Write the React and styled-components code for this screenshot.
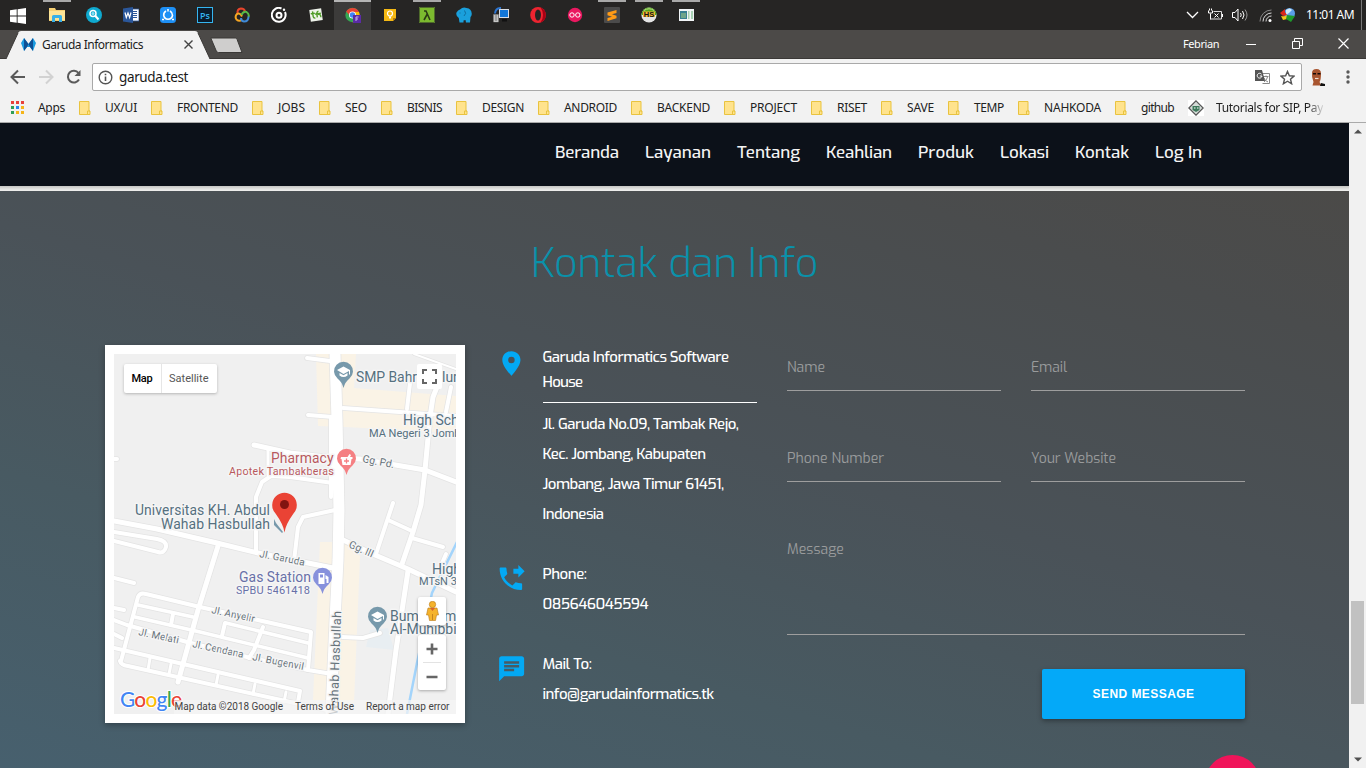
import React, { useLayoutEffect, useRef } from 'react';
import styled, { createGlobalStyle, css } from 'styled-components';

const ui = '"Noto Sans", "Open Sans", sans-serif';
const brand = 'Exo, "Exo 2", Roboto, sans-serif';

const Global = createGlobalStyle`
  * { box-sizing: border-box; }
  html, body { margin: 0; height: 100%; overflow: hidden; }
  body { font-family: ${ui}; background: #262524; }
`;

const FitBox = styled.span`
  display: block;
  width: ${(p) => p.$w}px;
  white-space: pre;
  flex: none;
`;

/* Spreads its letters so that the text fills exactly w pixels. */
function Fit({ w, children, className }) {
  const ref = useRef(null);
  useLayoutEffect(() => {
    const el = ref.current;
    el.style.letterSpacing = '0px';
    const natural = el.getBoundingClientRect().width;
    el.style.letterSpacing = `${(w - natural) / children.length}px`;
  }, [w, children]);
  return (
    <FitBox $w={w} className={className}>
      <span ref={ref}>{children}</span>
    </FitBox>
  );
}

/* ---------- desktop taskbar ---------- */
const Screen = styled.div`
  width: 1366px;
  height: 768px;
  display: flex;
  flex-direction: column;
  overflow: hidden;
`;
const Taskbar = styled.div`
  height: 30px;
  flex: none;
  display: flex;
  align-items: stretch;
  background: #262524;
`;
const StartButton = styled.div`
  width: 38px;
  padding: 7px 0 0 10px;
`;
const Task = styled.div`
  width: 37px;
  display: flex;
  justify-content: center;
  padding-top: 7px;
  ${(p) => p.$open && css`
    background: linear-gradient(#a9a9a9, #a9a9a9) center top / 28px 2px no-repeat;
  `}
  ${(p) => p.$active && css`
    background: linear-gradient(#b5b5b5, #b5b5b5) center top / 100% 2px no-repeat, #3c3b3a;
  `}
  svg { display: block; }
`;
const Tray = styled.div`
  margin-left: auto;
  display: flex;
  align-items: center;
  color: #fff;
  svg { display: block; flex: none; }
`;
const TrayIcon = styled.div`
  width: ${(p) => p.$w}px;
  display: flex;
  justify-content: center;
`;
const Clock = styled(Fit)`
  font-size: 12px;
  margin: -1px 7px 0 8px;
`;
const ShowDesktop = styled.div`
  width: 5px;
  height: 30px;
  border-left: 1px solid #777;
`;

const I = ({ children, w = 16, h = 16, vb }) => (
  <svg width={w} height={h} viewBox={vb || `0 0 ${w} ${h}`}>{children}</svg>
);

const taskIcons = [
  { open: true, el: <I><path d="M0 1h6l1 2h9v11H0z" fill="#f6d074" /><path d="M0 4h16v9H0z" fill="#fde496" /><path d="M3 15V9.5Q3 8 4.500 8h7Q13 8 13 9.500V15h-3v-4H6v4z" fill="#37b0e8" /></I> },
  { el: <I><circle cx="8" cy="8" r="8" fill="#0fa9cf" /><circle cx="7" cy="6.500" r="3" fill="none" stroke="#fff" strokeWidth="1.500" /><circle cx="7" cy="6.500" r="1.500" fill="#8be0f2" /><path d="M9 8.500l3.500 4" stroke="#fff" strokeWidth="2" /></I> },
  { el: <I><path d="M8 2h8v12H8z" fill="#fff" stroke="#2b579a" strokeWidth=".8" /><path d="M9 4.500h5M9 6.500h5M9 8.500h5M9 10.500h5" stroke="#2b579a" /><path d="M0 1.500L10 0v16L0 14.500z" fill="#2b579a" /><path d="M2 5.500l1.300 5L5 6l1.600 4.500 1.400-5" fill="none" stroke="#fff" strokeWidth="1.200" /></I> },
  { el: <I><rect width="16" height="16" rx="3.500" fill="#1e90f5" /><path d="M6 4Q3.500 5.500 3.700 8.500 4.500 12 8 12.300q4-.3 4.500-4Q12.500 5.500 10 4" fill="none" stroke="#fff" strokeWidth="1.600" /><path d="M8 2v2.500M2 12.500h2M12 12.500h2" stroke="#fff" strokeWidth="1.500" /></I> },
  { el: <I><rect x=".5" y=".5" width="15" height="15" fill="#0b1c2c" stroke="#35b5f0" /><text x="3" y="11.500" fontSize="9" fontFamily="Open Sans" fontWeight="600" fill="#35b5f0">Ps</text></I> },
  { el: <I><g fill="none" strokeWidth="2"><path d="M3.500 6.500Q3 2 7 1.500q3.500 0 4 3" stroke="#e8452c" /><path d="M8 9.500Q6 5.500 3 7 .5 9.500 2.500 12.500q3 2.500 5.500 0" stroke="#f5a623" /><path d="M7.500 8Q9 4 12.500 5q3 2 2 5" stroke="#58b947" /><path d="M14.500 9.500q0 5-4.500 5-3-.5-3-3.500" stroke="#3f8ad8" /></g></I> },
  { el: <I><path d="M10.500 1.500A6.900 6.900 0 1 0 14 5" fill="none" stroke="#fff" strokeWidth="2" /><circle cx="8" cy="8.200" r="2.500" fill="none" stroke="#fff" strokeWidth="2" /><circle cx="13" cy="2.800" r="1.200" fill="#fff" /></I> },
  { el: <I><g transform="rotate(-8 8 8)"><path d="M2 2h12v12H2z" fill="#eef3ea" /><path d="M3 6h4M5 4v5q0 2 2 2M7 7h6M11 4.500q-2 0-2 3v3M10 7.500q3 0 2.500 3.500" stroke="#4f9c28" strokeWidth="1.400" fill="none" /></g></I> },
  { open: true, active: true, el: <I><circle cx="7.500" cy="8" r="7.200" fill="#34a853" /><path d="M1.200 4.500A7.300 7.300 0 0 1 14 5H7.500L5 9z" fill="#e94335" /><path d="M14 5a7.300 7.300 0 0 1-6.500 10.200L10.500 9 9 5z" fill="#fbbc05" /><circle cx="7.500" cy="8" r="3.500" fill="#fff" /><circle cx="7.500" cy="8" r="2.700" fill="#4285f4" /><path d="M8 8h8v8H8z" fill="#5a2ca5" /><path d="M11 14v-4h2.500M11 12h2" stroke="#c9b0f0" fill="none" /></I> },
  { el: <I><path d="M2 2h12v9l-3 3H2z" fill="#f5b914" /><path d="M14 11h-3v3z" fill="#b77d0a" /><circle cx="8" cy="6.500" r="2.500" fill="none" stroke="#fff" strokeWidth="1.200" /><path d="M7 9.500h2v2H7z" fill="#fff" /></I> },
  { open: true, el: <I><path d="M0 0h16v16H0z" fill="#7cba2f" /><path d="M.5.5h15v15H.5z" fill="none" stroke="#4f6b2b" /><path d="M5 4h2l4 9M8 7.500L5 13" fill="none" stroke="#2b3b14" strokeWidth="1.600" /></I> },
  { el: <I><path d="M4 2.500Q7-.5 10.500 1q5 .5 5.300 6-.3 2.500-1.300 3l-.5 5.500H10L9.500 13 7.500 13.500v2H3.500L2.800 11Q-.5 9 .5 5.500 2 3 4 2.500z" fill="#1aa0dc" /><path d="M8.500 3.500q2.500 3-.5 5.500M4 5.500v1" stroke="#0f6ea0" fill="none" /></I> },
  { el: <I><path d="M6 2h10v9H6z" fill="#d8dde5" /><path d="M7 3h8v7H7z" fill="#1176d9" /><path d="M9 12h5v2.500H9z" fill="#111" /><path d="M.5 7.500h5v7.500h-5z" fill="#e8e8e8" stroke="#777" strokeWidth=".6" /><path d="M1.500 9h3M1.500 11h3M1.500 13h3" stroke="#555" /><path d="M2 6.500Q2.500.8 8 1" stroke="#2d75d0" strokeWidth="2" fill="none" /></I> },
  { el: <I><ellipse cx="8" cy="8" rx="7.800" ry="8" fill="#ee2430" /><path d="M10.500.6Q15.800 2.500 15.800 8t-5.300 7.400Q13 12 13 8T10.500.6z" fill="#a70014" /><ellipse cx="8" cy="8" rx="3" ry="5.500" fill="#262524" /></I> },
  { el: <I><circle cx="8" cy="8" r="7.200" fill="#ea1860" /><g fill="none" stroke="#fff"><circle cx="5" cy="8" r="2.200" /><circle cx="10.800" cy="8" r="2.200" /></g></I> },
  { open: true, el: <I><rect width="16" height="16" rx="1" fill="#4b4b4b" /><path d="M3.500 5.500L12.500 3v3L8 7.200l4.500 1.500v2.500l-9 2.800v-3l4.500-1.300-4.500-1.500z" fill="#ff9b16" /></I> },
  { open: true, el: <I><circle cx="8" cy="8" r="7.600" fill="#e4e4e4" /><path d="M.4 8a7.600 7.600 0 0 1 15.200 0z" fill="#54a51c" /><path d="M3 3.500Q8 0 13 3.500" stroke="#b7e08a" fill="none" /><path d="M2 4.500h12V10H2z" fill="#f2b632" /><text x="2.800" y="10" fontSize="7.500" fontWeight="700" fontFamily="Liberation Sans" fill="#111">HS</text></I> },
  { open: true, el: <I><path d="M1 2h15v12H1z" fill="#f2f5f7" /><path d="M2 4h7v8H2z" fill="#397f92" /><path d="M3 6h5v5H3z" fill="#6fa58a" /><path d="M10 4h1.500v8H10zM13 4h2v8h-2z" fill="#a9d3b5" /></I> },
];

/* ---------- browser chrome ---------- */
const TabStrip = styled.div`
  height: 29px;
  flex: none;
  display: flex;
  background: #4c4a48;
  border-bottom: 1px solid #3b3937;
`;
const Tab = styled.div`
  position: relative;
  width: 206px;
  height: 29px;
  margin-left: 6px;
  padding: 0 0 0 15px;
  display: flex;
  align-items: center;
  font-size: 12px;
  color: #1d1d1d;
  > * { position: relative; }
`;
const TabShape = styled.svg`
  && { position: absolute; }
  left: 0;
  top: 0;
`;
const TabTitle = styled(Fit)`margin: 0 41px 0 6px;`;
const NewTab = styled.svg`margin: 7px 0 0 -2px;`;
const WindowControls = styled.div`
  margin-left: auto;
  display: flex;
  align-items: center;
  font-size: 11px;
  color: #fff;
  padding-right: 17px;
  height: 27px;
  svg { display: block; }
`;
const Control = styled.div`margin-left: ${(p) => p.$gap}px;`;

const Toolbar = styled.div`
  height: 33px;
  flex: none;
  display: flex;
  align-items: center;
  padding: 3px 0 0 10px;
  background: #f2f2f2;
  svg { display: block; flex: none; }
`;
const NavIcons = styled.div`
  width: 82px;
  display: flex;
  gap: 12px;
`;
const Address = styled.div`
  width: 1210px;
  height: 28px;
  display: flex;
  align-items: center;
  gap: 6px;
  padding: 0 6px 0 5px;
  border: 1px solid #a9a9a9;
  border-radius: 2px;
  background: #fff;
  font-size: 13.500px;
  color: #1a1a1a;
`;
const AddressActions = styled.div`
  margin-left: auto;
  display: flex;
  align-items: center;
  gap: 10px;
`;
const Profile = styled.div`margin-left: 7px; width: 18px;`;
const Dots = styled.div`margin-left: 19px;`;

const Bookmarks = styled.div`
  height: 31px;
  flex: none;
  display: flex;
  align-items: center;
  padding: 1px 0 0 11px;
  background: #f2f2f2;
  border-bottom: 1px solid #aaa;
  font-size: 12px;
  color: #222;
  svg { display: block; flex: none; }
`;
const Bookmark = styled.div`
  display: flex;
  align-items: center;
  gap: ${(p) => p.$gap || 14}px;
  margin-right: 14px;
`;
const Faded = styled(Fit)`
  mask-image: linear-gradient(90deg, #000 86%, transparent 102%);
`;

const Folder = () => (
  <svg width="12" height="14" viewBox="0 0 12 14">
    <path d="M.5.500h9.500v9.500h1v3.500H.5z" fill="#ffe38d" stroke="#e9c33f" />
    <path d="M8.500 13v-3H11" fill="none" stroke="#e9c33f" />
  </svg>
);

const folders = [
  ['UX/UI', 32], ['FRONTEND', 61], ['JOBS', 27], ['SEO', 22], ['BISNIS', 35], ['DESIGN', 42],
  ['ANDROID', 53], ['BACKEND', 53], ['PROJECT', 47], ['RISET', 30], ['SAVE', 27], ['TEMP', 30],
  ['NAHKODA', 57], ['github', 33],
];

/* ---------- page ---------- */
const Viewport = styled.div`
  flex: 1;
  display: flex;
  min-height: 0;
`;
const Page = styled.div`
  width: 1349px;
  font-family: ${brand};
  overflow: hidden;
  display: flex;
  flex-direction: column;
`;
const Header = styled.header`
  height: 68px;
  flex: none;
  display: flex;
  align-items: center;
  justify-content: flex-end;
  gap: 26px;
  padding: 0 147px 9px 0;
  color: #f4f4f4;
  font-size: 17px;
  font-weight: 500;
  background: linear-gradient(#0c1119 63px, #c5c5c2 63px, #e3e3e1 66px, #efefee 68px);
`;
const Section = styled.section`
  flex: 1;
  min-height: 0;
  background: linear-gradient(197deg, #4b4a48 0%, #4a4c4d 15%, #4a5258 45%, #485a62 70%, #47606e 100%);
`;
const Title = styled.h1`
  margin: 0 auto;
  padding-top: 47px;
  width: 287px;
  height: 154px;
  line-height: 50px;
  font-size: 41px;
  font-weight: 350;
  color: #0a91aa;
`;
const Columns = styled.div`
  display: flex;
  padding-left: 105px;
  align-items: flex-start;
`;
const MapCard = styled.div`
  position: relative;
  width: 360px;
  height: 378px;
  padding: 9px;
  background: #fff;
  box-shadow: 0 2px 6px rgba(0, 0, 0, 0.3);
  font-family: Roboto, sans-serif;
  svg { display: block; }
`;
const MapSwitch = styled.div`
  position: absolute;
  left: 19px;
  top: 19px;
  display: flex;
  height: 29px;
  border-radius: 2px;
  overflow: hidden;
  background: #fff;
  box-shadow: 0 1px 3px rgba(0, 0, 0, 0.25);
`;
const MapMode = styled.div`
  padding: 0 8px 0 7.500px;
  line-height: 29px;
  font-size: 11px;
  font-weight: ${(p) => (p.$on ? 500 : 400)};
  color: ${(p) => (p.$on ? '#000' : '#565656')};
  & + & { border-left: 1px solid #e6e6e6; }
`;
const MapButton = styled.div`
  position: absolute;
  right: ${(p) => p.$right || 19}px;
  top: ${(p) => p.$top}px;
  width: ${(p) => p.$w || 28}px;
  height: ${(p) => p.$h}px;
  display: flex;
  align-items: center;
  justify-content: center;
  border-radius: 2px;
  background: #fff;
  box-shadow: 0 1px 3px rgba(0, 0, 0, ${(p) => (p.$flat ? 0 : 0.3)});
`;
const MapCredits = styled.div`
  position: absolute;
  right: 9px;
  bottom: 9px;
  height: 14px;
  display: flex;
  gap: 12px;
  padding: 0 6.500px 0 1px;
  background: rgba(245, 245, 245, 0.7);
  font-size: 10px;
  line-height: 14px;
  color: #444;
`;

const Info = styled.div`
  width: 253px;
  margin-left: 33px;
  padding-left: 1px;
  color: #fff;
  font-size: 15px;
  font-weight: 500;
`;
const InfoRow = styled.div`
  display: flex;
  margin-bottom: 30px;
`;
const InfoIcon = styled.div`
  width: 43.500px;
  flex: none;
  padding-top: ${(p) => p.$top}px;
  svg { display: block; }
`;
const Company = styled.div`
  width: 214px;
  height: 58px;
  line-height: 25px;
  border-bottom: 1px solid #fff;
  margin-bottom: 6px;
`;
const Lines = styled.div`line-height: 30px;`;

const Form = styled.form`
  margin-left: 36px;
  width: 458px;
  display: grid;
  grid-template-columns: 214px 214px;
  column-gap: 30px;
  font-size: 14px;
  color: #999b9c;
`;
const Field = styled.label`
  display: block;
  height: 46px;
  margin-bottom: 45px;
  padding-top: 14px;
  line-height: 18px;
  border-bottom: 1px solid #9e9e9e;
  ${(p) => p.$wide && css`
    grid-column: span 2;
    height: 108px;
    margin-bottom: 34px;
  `}
`;
const Send = styled.button`
  grid-column: span 2;
  justify-self: end;
  width: 203px;
  height: 50px;
  border: 0;
  border-radius: 2px;
  display: flex;
  align-items: center;
  justify-content: center;
  background: #04a9f8;
  color: #fff;
  font: 700 12px "Liberation Sans", Arial, sans-serif;
  box-shadow: 0 2px 5px rgba(0, 0, 0, 0.35);
`;
const Fab = styled.div`
  position: fixed;
  left: 1205px;
  top: 755px;
  width: 55px;
  height: 55px;
  border-radius: 50%;
  background: #f0145a;
`;
const Scrollbar = styled.div`
  width: 17px;
  background: #f1f1f1;
  display: flex;
  flex-direction: column;
  align-items: center;
  padding: 6px 0;
  svg { display: block; }
`;
const Thumb = styled.div`
  width: 13px;
  height: 103px;
  margin: 467px 0 auto;
  background: #c1c1c1;
`;

const links = [['Beranda', 64], ['Layanan', 66], ['Tentang', 63], ['Keahlian', 66], ['Produk', 56], ['Lokasi', 49], ['Kontak', 54], ['Log In', 47]];

const roads = [
  ['M307 358L330 361', 4], ['M414 354L456 369', 2], ['M343 408L456 416', 4], ['M308 415L333 417', 4],
  ['M410 383L407 409', 4], ['M437 387L433 397L430 417L425 470L421 505L413 532L402 564', 5],
  ['M451 387L446 412', 4], ['M331 418L331 497', 4], ['M254 445L290 453L335 458L360 459L425 470L456 482', 5],
  ['M268 450L268 475', 3], ['M256 551L256 497L262 482L271 476L290 477L333 483', 4],
  ['M335 510L303 517L298 527L294 561', 4], ['M393 503L376 554', 4], ['M388 520L412 531', 4],
  ['M412 538L443 547', 4], ['M446 554L440 568', 4], ['M341 539L375 555L408 569L456 592', 5],
  ['M408 571L396 650L388 714', 5], ['M114 521L157 529L217 543L258 553L333 568', 5],
  ['M114 532L157 539Q167 541 166 547Q164 554 158 552L114 541', 4],
  ['M114 578L134 583', 4], ['M114 608L124 610', 4], ['M218 546L198 610L178 682', 5],
  ['M121 661L138 597Q140 592 146 594L200 607L311 632L308 670L332 674', 4],
  ['M138 605L193 617', 3.5], ['M135 617L200 632L308 658', 3.5], ['M226 623L308 643', 3.500],
  ['M114 620L127 625L187 642L247 657L308 670', 4], ['M114 648L183 664L300 691L298 702', 4],
  ['M120 661Q121 665 128 666L290 702L332 711', 4], ['M173 614L171 625', 4], ['M225 623L222 636', 4],
  ['M263 627L254 650L249 658', 4], ['M150 658L148 670', 3], ['M171 664L169 674', 3],
  ['M218 675L216 685', 3], ['M255 684L253 694', 3], ['M286 692L284 702', 3], ['M114 634L122 638', 4],
  ['M342 637L363 638L380 633', 4], ['M114 459L117 459', 4],
  ['M335 354L337 420L339 510L338 560L335 620L331 714', 11],
];

const Label = styled.text`
  font-family: Roboto, sans-serif;
  font-size: ${(p) => p.$s || 14}px;
  fill: ${(p) => p.$c || '#56707f'};
  stroke: #f5f5f5;
  stroke-width: 3px;
  stroke-linejoin: round;
  paint-order: stroke;
`;

const MapPin = ({ x, y, color, children }) => (
  <g transform={`translate(${x} ${y})`}>
    <path d="M0 13Q-1.500 7-6 3.500A9.500 9.500 0 1 1 6 3.500Q1.500 7 0 13Z" transform="translate(0 2)" fill={color} />
    <g fill="#fff">{children}</g>
  </g>
);
const Cap = () => (
  <path d="M-6.500-3L0-6.500 6.500-3v4.500H5.500V-2L0 1ZM-4 0v2.500Q0 5.500 4 2.500V0L0 2.200Z" />
);

const street = '#66727a';
const MapDrawing = () => (
  <svg width="342" height="360" viewBox="114 354 342 360">
    <path d="M114 354h342v360H114z" fill="#f0f0f0" />
    <path d="M316 354h40l-2 34 102 8v37l-111-6-27-1z" fill="#faf3e6" />
    <path d="M320 542h25l15 14-6 147-41-3z" fill="#faf3e6" />
    <path d="M370 630l18-2 6 22-28-3z" fill="#e8eef2" />
    <path d="M457 542L432 593L417 663L407 714" fill="none" stroke="#a3d4fb" strokeWidth="2.500" />
    <g fill="none" strokeLinecap="round" strokeLinejoin="round">
      {roads.map(([d, w]) => <path key={d} d={d} stroke="#e4e4e4" strokeWidth={w + 1.500} />)}
      {roads.map(([d, w]) => <path key={d} d={d} stroke="#fff" strokeWidth={w} />)}
    </g>
    <MapPin x={343.500} y={373} color="#7799ab"><Cap /></MapPin>
    <MapPin x={377.500} y={618} color="#7799ab"><Cap /></MapPin>
    <MapPin x={346.500} y={460} color="#f58083">
      <path d="M-5.500-3H1L3-6 4.500-5 3.500-3H6V-1H5L4 5H-4L-5-1H-6Z" />
      <path d="M0-1.500v5M-2.500 1h5" stroke="#f58083" strokeWidth="1.300" />
    </MapPin>
    <MapPin x={322.500} y={579} color="#8791dc">
      <path d="M-4-6H2V5H-4ZM3-4l3 2v6H4V0H3Z" />
      <path d="M-2.500-4.500h3v3h-3z" fill="#8791dc" />
    </MapPin>
    <Label x="356" y="382" textLength="61">SMP Bahr</Label>
    <Label x="442" y="382">lum</Label>
    <Label x="403" y="425">High School</Label>
    <Label x="369" y="437" $s={11}>MA Negeri 3 Jombang</Label>
    <Label x="271" y="463" textLength="62.500" $c="#b8595d">Pharmacy</Label>
    <Label x="229" y="475" textLength="105" $s={11} $c="#b8595d">Apotek Tambakberas</Label>
    <Label x="135" y="515" textLength="135">Universitas KH. Abdul</Label>
    <Label x="161" y="529" textLength="109">Wahab Hasbullah</Label>
    <Label x="239" y="582" textLength="72" $c="#6870a8">Gas Station</Label>
    <Label x="236" y="594" textLength="74" $s={11} $c="#6870a8">SPBU 5461418</Label>
    <Label x="432" y="574">High School</Label>
    <Label x="419" y="585" $s={11}>MTsN 3</Label>
    <Label x="390" y="620.500">Bum</Label>
    <Label x="444" y="620.500">ma</Label>
    <Label x="390" y="634">Al-Muhibbin</Label>
    <Label transform="translate(362 462) rotate(11)" textLength="32" $s={10.500} $c={street}>Gg. Pd.</Label>
    <Label transform="translate(348 547) rotate(24)" textLength="26" $s={10.500} $c={street}>Gg. III</Label>
    <Label transform="translate(259 557) rotate(11)" textLength="46" $s={10} $c={street}>Jl. Garuda</Label>
    <Label transform="translate(211 613) rotate(12)" textLength="44" $s={10} $c={street}>Jl. Anyelir</Label>
    <Label transform="translate(138 635) rotate(12)" textLength="41" $s={10} $c={street}>Jl. Melati</Label>
    <Label transform="translate(192 647) rotate(12)" textLength="52" $s={10} $c={street}>Jl. Cendana</Label>
    <Label transform="translate(252 660) rotate(11)" textLength="52" $s={10} $c={street}>Jl. Bugenvil</Label>
    <Label transform="translate(337.500 715) rotate(-88)" textLength="104" $s={12.500} $c={street}>Wahab Hasbullah</Label>
    <path d="M274 519l2 4 7 9-1 1-8-8z" fill="#7799ab" />
    <path d="M284.500 532.500Q283.500 524.500 275.500 513.500A12.300 12.300 0 1 1 293.500 513.500Q285.500 524.500 284.500 532.500Z" fill="#ea4335" />
    <circle cx="284.500" cy="504.500" r="4.500" fill="#811411" />
    <text x="120" y="707" fontSize="21" fontWeight="500" fontFamily="Lato, sans-serif" textLength="62" stroke="#fff" strokeWidth="2" paintOrder="stroke">
      <tspan fill="#4285f4">G</tspan><tspan fill="#ea4335">o</tspan><tspan fill="#fbbc05">o</tspan>
      <tspan fill="#4285f4">g</tspan><tspan fill="#34a853">l</tspan><tspan fill="#ea4335">e</tspan>
    </text>
  </svg>
);

export default function App() {
  return (
    <Screen>
      <Global />
      <Taskbar>
        <StartButton>
          <I><path d="M0 2.300L6.700 1.300V7.500H0zM7.600 1.200L16 0V7.500H7.600zM0 8.400H6.700V14.700L0 13.700zM7.600 8.400H16V16L7.600 14.800z" fill="#fff" /></I>
        </StartButton>
        {taskIcons.map((t, i) => <Task key={i} $open={t.open} $active={t.active}>{t.el}</Task>)}
        <Tray>
          <TrayIcon $w={24}><I w={13} h={8}><path d="M1 1l5.500 5.500L12 1" fill="none" stroke="#fff" strokeWidth="1.300" /></I></TrayIcon>
          <TrayIcon $w={24}><I w={17} h={14}><g fill="none" stroke="#fff"><path d="M.5 2.500v2.500h4V2.500M1.500 .5v2M3.500 .5v2M2.500 5.500v6" /><path d="M5.500 3.500h8v7.500H2.500" stroke="#ddd" /><path d="M14.500 6v3M6.500 5.500l4 4M10.500 5.500l-4 4" /></g></I></TrayIcon>
          <TrayIcon $w={24}><I w={17} h={14}><g fill="none" stroke="#fff"><path d="M.5 4.500h2.500l3-3.500v12l-3-3.500H.5zM8.500 5q1.500 2 0 4M10.500 3q3 4 0 8" /><path d="M13 1.500q4 5.500 0 11" stroke="#999" /></g></I></TrayIcon>
          <TrayIcon $w={26}><I w={13} h={13}><g fill="none" stroke="#ddd"><path d="M1 12.500A11.500 11.500 0 0 1 12.500 1" stroke="#888" /><path d="M4 12.500A8.500 8.500 0 0 1 12.500 4M7 12.500A5.500 5.500 0 0 1 12.500 7" /></g><circle cx="11" cy="11.500" r="1.500" fill="#fff" /></I></TrayIcon>
          <TrayIcon $w={20}><I w={16} h={14}><circle cx="9.500" cy="5.500" r="5.500" fill="#5b9ee8" /><path d="M6 2q4-3 6 0l-3 3-3 2z" fill="#cfe9f8" /><path d="M0 5l5-4v3l2 3-4 1z" fill="#d9261c" /><path d="M1 8q4 1 7-1l-1 4-4 1z" fill="#f3c51b" /><path d="M7 7l8 1-4 6-5-3z" fill="#1f9a2c" /></I></TrayIcon>
          <Clock w={48}>11:01 AM</Clock>
          <ShowDesktop />
        </Tray>
      </Taskbar>

      <TabStrip>
        <Tab>
          <TabShape width="206" height="29" viewBox="0 0 206 29">
            <path d="M0 29L12 3Q13 1 15 1H189Q191 1 192 3L204 29Z" fill="#f2f2f2" />
            <path d="M0 29L12 3M192 3L204 29" stroke="#3b3937" />
          </TabShape>
          <I w={15} h={13}><path d="M3 0L7.500 6 12 0l3 5-3 8-3-4H6l-3 4-3-8z" fill="#1a9be0" /><path d="M3 0l4.500 6L6 9 3 13zM12 0L7.500 6 9 9l3 4z" fill="#0d4f94" /></I>
          <TabTitle w={101}>Garuda Informatics</TabTitle>
          <I w={9} h={9}><path d="M.5.5l8 8M8.500.5l-8 8" stroke="#444" strokeWidth="1.400" /></I>
        </Tab>
        <NewTab width="34" height="17" viewBox="0 0 34 17"><path d="M.8 1H25.300q1.200 0 1.700 1.200L32 15.500H8.500Q7 15.500 6.300 14Z" fill="#cfcecd" stroke="#3b3937" /></NewTab>
        <WindowControls>
          <Fit w={36}>Febrian</Fit>
          <Control $gap={27}><I w={10} h={10}><path d="M0 5.500h10" stroke="#fff" /></I></Control>
          <Control $gap={36}><I w={11} h={11}><path d="M.5 3.500h7v7h-7zM2.500 3V.5h8v7H8" fill="none" stroke="#fff" /></I></Control>
          <Control $gap={35}><I w={11} h={11}><path d="M.5.5l10 10M10.500.5l-10 10" stroke="#fff" strokeWidth="1.200" /></I></Control>
        </WindowControls>
      </TabStrip>

      <Toolbar>
        <NavIcons>
          <I><path d="M15 8H2M8 1.500L1.500 8 8 14.500" fill="none" stroke="#5a5a5a" strokeWidth="2" /></I>
          <I><path d="M1 8h13M8 1.500L14.500 8 8 14.500" fill="none" stroke="#d2d2d2" strokeWidth="2" /></I>
          <I><path d="M13 10.500A5.900 5.900 0 1 1 12.500 4" fill="none" stroke="#5a5a5a" strokeWidth="2" /><path d="M14.500 1v6h-6z" fill="#5a5a5a" /></I>
        </NavIcons>
        <Address>
          <I w={15} h={15}><circle cx="7.500" cy="7.500" r="6.300" fill="none" stroke="#555" strokeWidth="1.400" /><path d="M7.500 6.500v4.500M7.500 3.700v1.500" stroke="#555" strokeWidth="1.600" /></I>
          <Fit w={69}>garuda.test</Fit>
          <AddressActions>
            <I w={15} h={14}><path d="M5.500 3.500h9v10h-7" fill="#fff" stroke="#888" /><path d="M8 6.500h5.500M11 5.500v1M9 12q3-2 3.500-5M9 8q1 3 4 4" stroke="#888" fill="none" /><path d="M0 0h7l3 11H0z" fill="#555" /><path d="M6.500 4.200A2.400 2.400 0 1 0 7 6H4.800" fill="none" stroke="#fff" /></I>
            <I w={15} h={15} vb="0 0 16 16"><path d="M8 1.500l2 4.600 5 .4-3.800 3.300 1.200 4.900L8 12l-4.400 2.700 1.200-4.900L1 6.500l5-.4z" fill="none" stroke="#555" strokeWidth="1.500" /></I>
          </AddressActions>
        </Address>
        <Profile><I w={18} h={18}><path d="M3 5Q3 1 7.500 1T12 5.500Q12 12 10.500 14l2 3.500H3.500l1-3.500Q2.500 9 3 5z" fill="#a8552f" /><path d="M4 5h3v1.500H4zM8.500 5h3v1.500h-3z" fill="#160b08" /><path d="M6 10.500h3.500" stroke="#f1ddd0" strokeWidth="1.200" /><path d="M12 15l4 1v2h-5z" fill="#111" /></I></Profile>
        <Dots><I w={4} h={14}><g fill="#5a5a5a"><circle cx="2" cy="2" r="1.700" /><circle cx="2" cy="7" r="1.700" /><circle cx="2" cy="12" r="1.700" /></g></I></Dots>
      </Toolbar>

      <Bookmarks>
        <Bookmark>
          <I w={13} h={13}>
            <path d="M0 0h3v3H0zM5 0h3v3H5zM10 0h3v3h-3z" fill="#e8413c" />
            <path d="M0 5h3v3H0z" fill="#2e9e57" /><path d="M5 5h3v3H5z" fill="#2c87ee" /><path d="M10 5h3v3h-3zM10 10h3v3h-3zM5 10h3v3H5z" fill="#f5b51a" />
            <path d="M0 10h3v3H0z" fill="#2e9e57" />
          </I>
          <Fit w={27}>Apps</Fit>
        </Bookmark>
        {folders.map(([name, w]) => (
          <Bookmark key={name}><Folder /><Fit w={w}>{name}</Fit></Bookmark>
        ))}
        <Bookmark $gap={12}>
          <I><path d="M0 0h16v16H0z" fill="#fff" /><path d="M8 .8L15.200 8 8 15.200.8 8z" fill="#d5dcd8" stroke="#555" strokeWidth="1.200" /><path d="M4.500 6h7v4l-3.500 2-3.500-2z" fill="#3f7a5c" /><path d="M6 8h1.500M9 8h1.500" stroke="#fff" /></I>
          <Faded w={107}>Tutorials for SIP, Pay</Faded>
        </Bookmark>
      </Bookmarks>

      <Viewport>
        <Page>
          <Header>{links.map(([t, w]) => <Fit key={t} w={w}>{t}</Fit>)}</Header>
          <Section>
            <Title><Fit w={287}>Kontak dan Info</Fit></Title>
            <Columns>
              <MapCard>
                <MapDrawing />
                <MapSwitch><MapMode $on><Fit w={21}>Map</Fit></MapMode><MapMode><Fit w={39.500}>Satellite</Fit></MapMode></MapSwitch>
                <MapButton $top={19} $right={23} $w={25} $h={25} $flat>
                  <I w={15} h={15}><path d="M1 5V1h4M10 1h4v4M14 10v4h-4M5 14H1v-4" fill="none" stroke="#666" strokeWidth="2" /></I>
                </MapButton>
                <MapButton $top={252} $h={28}>
                  <I w={13} h={20}><circle cx="6.500" cy="3.500" r="3.200" fill="#f5b32c" stroke="#b9781a" strokeWidth=".6" /><path d="M2 7h9l1.500 7h-2l-1 5.500H3.500l-1-5.500h-2z" fill="#f5b32c" stroke="#b9781a" strokeWidth=".6" /><path d="M4 7h5l-2.500 3z" fill="#d9632b" /><path d="M6.500 13v6" stroke="#b9781a" strokeWidth=".8" /></I>
                </MapButton>
                <MapButton $top={290} $h={55}>
                  <I w={18} h={42}><path d="M3.500 7h11M9 1.500v11M3.500 35h11" stroke="#666" strokeWidth="2.600" /><path d="M0 20.500h18" stroke="#e3e3e3" /></I>
                </MapButton>
                <MapCredits>
                  <Fit w={108.500}>Map data ©2018 Google</Fit><Fit w={59}>Terms of Use</Fit><Fit w={83.500}>Report a map error</Fit>
                </MapCredits>
              </MapCard>

              <Info>
                <InfoRow>
                  <InfoIcon $top={4}><I w={28} h={31} vb="0 0 26 29"><path d="M11.500 2C6.700 2 3 5.500 3 10.200 3 16.300 11.500 25 11.500 25S20 16.300 20 10.200C20 5.500 16.300 2 11.500 2zm0 11.300a3 3 0 1 1 0-6.100 3 3 0 0 1 0 6.100z" fill="#03a9f4" /></I></InfoIcon>
                  <div>
                    <Company><Fit w={186}>Garuda Informatics Software</Fit><Fit w={40}>House</Fit></Company>
                    <Lines>
                      <Fit w={196}>Jl. Garuda No.09, Tambak Rejo,</Fit>
                      <Fit w={163}>Kec. Jombang, Kabupaten</Fit>
                      <Fit w={181}>Jombang, Jawa Timur 61451,</Fit>
                      <Fit w={61}>Indonesia</Fit>
                    </Lines>
                  </div>
                </InfoRow>
                <InfoRow>
                  <InfoIcon $top={5}><I w={30} h={30} vb="2.500 .2 24 24"><path d="M18 11l5-5-5-5v3h-4v4h4v3zm2 4.500c-1.250 0-2.450-.2-3.570-.570-.350-.110-.740-.030-1.020.240l-2.200 2.200c-2.830-1.440-5.150-3.750-6.590-6.590l2.200-2.210c.280-.260.360-.650.250-1C8.700 6.450 8.500 5.250 8.500 4c0-.550-.450-1-1-1H4c-.550 0-1 .450-1 1 0 9.390 7.610 17 17 17 .550 0 1-.450 1-1v-3.500c0-.550-.450-1-1-1z" fill="#03a9f4" /></I></InfoIcon>
                  <Lines><Fit w={44}>Phone:</Fit><Fit w={105.500}>085646045594</Fit></Lines>
                </InfoRow>
                <InfoRow>
                  <InfoIcon $top={6}><I w={30} h={30} vb="2.500 1 24 24"><path d="M20 2H4c-1.100 0-1.990.9-1.990 2L2 22l4-4h14c1.100 0 2-.9 2-2V4c0-1.100-.9-2-2-2zM6 9h12v2H6V9zm8 5H6v-2h8v2zm4-6H6V6h12v2z" transform="translate(.6 0)" fill="#03a9f4" /></I></InfoIcon>
                  <Lines><Fit w={49}>Mail To:</Fit><Fit w={171}>info@garudainformatics.tk</Fit></Lines>
                </InfoRow>
              </Info>

              <Form>
                <Field><Fit w={38}>Name</Fit></Field>
                <Field><Fit w={36}>Email</Fit></Field>
                <Field><Fit w={97}>Phone Number</Fit></Field>
                <Field><Fit w={85}>Your Website</Fit></Field>
                <Field $wide><Fit w={57}>Message</Fit></Field>
                <Send type="button"><Fit w={102}>SEND MESSAGE</Fit></Send>
              </Form>
            </Columns>
          </Section>
          <Fab />
        </Page>
        <Scrollbar>
          <I w={8} h={5}><path d="M0 4.500L4 .5l4 4z" fill="#505050" /></I>
          <Thumb />
          <I w={8} h={5}><path d="M0 .5l4 4 4-4z" fill="#505050" /></I>
        </Scrollbar>
      </Viewport>
    </Screen>
  );
}
